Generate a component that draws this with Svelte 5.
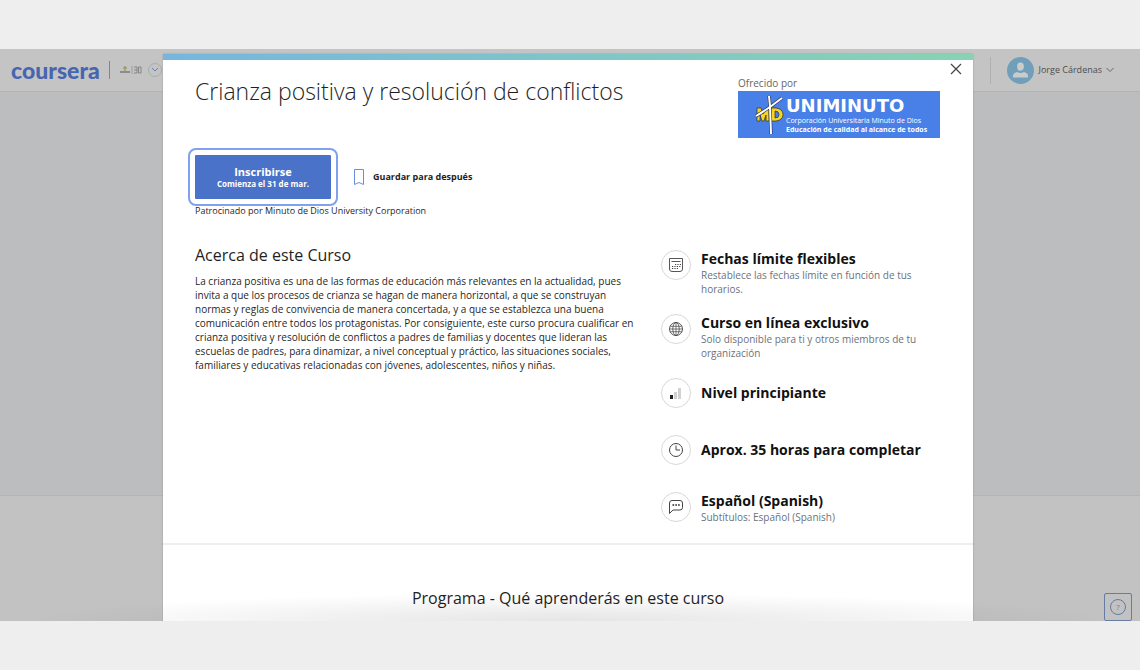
<script>
  const course = {
    title: 'Crianza positiva y resolución de conflictos',
    starts: 'Comienza el 31 de mar.',
    sponsor: 'Patrocinado por Minuto de Dios University Corporation',
    about: 'La crianza positiva es una de las formas de educación más relevantes en la actualidad, pues invita a que los procesos de crianza se hagan de manera horizontal, a que se construyan normas y reglas de convivencia de manera concertada, y a que se establezca una buena comunicación entre todos los protagonistas. Por consiguiente, este curso procura cualificar en crianza positiva y resolución de conflictos a padres de familias y docentes que lideran las escuelas de padres, para dinamizar, a nivel conceptual y práctico, las situaciones sociales, familiares y educativas relacionadas con jóvenes, adolescentes, niños y niñas.',
  };

  const features = [
    { icon: 'calendar', title: 'Fechas límite flexibles', text: 'Restablece las fechas límite en función de tus horarios.' },
    { icon: 'globe', title: 'Curso en línea exclusivo', text: 'Solo disponible para ti y otros miembros de tu organización' },
    { icon: 'level', title: 'Nivel principiante' },
    { icon: 'clock', title: 'Aprox. 35 horas para completar' },
    { icon: 'chat', title: 'Español (Spanish)', text: 'Subtítulos: Español (Spanish)' },
  ];

  let open = $state(true);
  let saved = $state(false);

  function close() {
    open = false;
  }

  function handleKeyDown({ key }) {
    if (key === 'Escape') close();
  }
</script>

<svelte:window onkeydown={handleKeyDown} />

<div class="stage">
  <div class="page">
    <header class="topbar">
      <a class="brand" href="#inicio">coursera</a>
      <div class="partner">
        <svg width="22" height="10" viewBox="0 0 22 10" aria-hidden="true">
          <path d="M0 6h10v2H0z" fill="#8a8c90" />
          <path d="M5 1v5M3 3h4" stroke="#a39a6c" stroke-width="1.5" />
          <path d="M12 1v8" stroke="#9d9d9d" />
          <path d="M14 2h3v6h-3M14 5h3M18.500 2h2.500v6h-2.500z" fill="none" stroke="#858585" />
        </svg>
        <button class="round" type="button" aria-label="Más">
          <svg width="8" height="6" viewBox="0 0 8 6"><path d="M1 1l3 3 3-3" fill="none" stroke="#6783b8" /></svg>
        </button>
      </div>
      <button class="user" type="button">
        <svg width="27" height="27" viewBox="0 0 27 27" aria-hidden="true">
          <circle cx="13.500" cy="13.500" r="13.500" fill="#719fba" />
          <path d="M13.500 5.500q3.400 0 3.400 4t-3.400 4.200-3.400-4.200 3.400-4z" fill="#c9cccd" />
          <path d="M6 20.500v-1.500q0-3 4-4 3.500 2 7 0 4 1 4 4v1.500z" fill="#c9cccd" />
        </svg>
        <span>Jorge Cárdenas</span>
        <svg width="8" height="6" viewBox="0 0 8 6" aria-hidden="true"><path d="M.5 1L4 4.500 7.500 1" fill="none" stroke="#666" /></svg>
      </button>
    </header>
    <div class="hero"></div>
    <div class="below"></div>
    <button class="help" type="button" aria-label="Ayuda">
      <span>?</span>
    </button>
  </div>

  {#if open}
    <div class="overlay">
      <div class="dialog" role="dialog" aria-modal="true" aria-labelledby="course-title">
        <button class="close" type="button" aria-label="Cerrar" onclick={close}>
          <svg width="12" height="12" viewBox="0 0 12 12"><path d="M1 1l10 10M11 1L1 11" fill="none" stroke="#444" stroke-width="1.200" /></svg>
        </button>

        <div class="head">
          <h1 id="course-title">{course.title}</h1>
          <div class="offered">
            <span>Ofrecido por</span>
            <div class="uniminuto">
              <svg width="30" height="43" viewBox="0 0 30 43" aria-hidden="true">
                <path d="M3 28V15h4l2 6 3-6h3v13h-3v-6l-2 6H8l-2-6v6zM17 15h5q7 1 7 6.500T22 28h-5zm4 3v7q4 0 4-3.500T21 18z" fill="#f7d51d" stroke="#252b45" stroke-width=".7" fill-rule="evenodd" />
                <path d="M15 3l1 10 1 28M2 23Q14 16 28 5" fill="none" stroke="#26325a" stroke-width="3.200" />
                <path d="M15 3l1 10 1 28M2 23Q14 16 28 5" fill="none" stroke="#fff" stroke-width="2" />
              </svg>
              <div class="words">
                <strong>UNIMINUTO</strong>
                <span>Corporación Universitaria Minuto de Dios</span>
                <b>Educación de calidad al alcance de todos</b>
              </div>
            </div>
          </div>
        </div>

        <div class="actions">
          <button class="enroll" type="button">
            <span>Inscribirse</span>
            <small>{course.starts}</small>
          </button>
          <button class="save" type="button" aria-pressed={saved} onclick={() => (saved = !saved)}>
            <svg width="12" height="18" viewBox="0 0 12 18" aria-hidden="true">
              <path d="M1.500 1.500h9v15L6 14.500l-4.500 2z" fill={saved ? '#4a72cc' : 'none'} stroke="#6b8fd6" />
            </svg>
            Guardar para después
          </button>
        </div>
        <p class="sponsor">{course.sponsor}</p>

        <div class="body">
          <section class="about">
            <h2>Acerca de este Curso</h2>
            <p>{course.about}</p>
          </section>
          <ul class="features">
            {#each features as feature}
              <li>
                <span class="icon">
                  <svg width="16" height="16" viewBox="0 0 16 16" fill="none" stroke="#444" aria-hidden="true">
                    {#if feature.icon === 'calendar'}
                      <path d="M1.500 1.500h13V12q0 2.500-2.500 2.500H4Q1.500 14.500 1.500 12z" stroke-width=".9" />
                      <path d="M3.500 4.500h9" stroke-width=".9" />
                      <path d="M7 7.500h6M4 9.500h9M4 11.500h6" stroke-width="1.200" stroke-dasharray="1.200 1.200" />
                    {:else if feature.icon === 'globe'}
                      <circle cx="8" cy="8" r="6.500" stroke-width=".9" />
                      <ellipse cx="8" cy="8" rx="3.200" ry="6.500" stroke-width=".8" />
                      <path d="M8 1.500v13M2.200 5.300h11.600M1.500 8h13M2.200 10.700h11.600" stroke-width=".7" />
                    {:else if feature.icon === 'level'}
                      <path d="M2 10h3v4H2z" fill="#222" stroke="none" />
                      <path d="M6 7h3v7H6zM10 3h3v11h-3z" fill="#d2d2d2" stroke="none" />
                    {:else if feature.icon === 'clock'}
                      <circle cx="8" cy="8" r="6.500" />
                      <path d="M8 3.500V8h4" />
                    {:else}
                      <path d="M1.500 14.500V4q0-2.500 2.500-2.500h8q2.500 0 2.500 2.500v4.500q0 2.500-2.500 2.500H5z" stroke-linejoin="round" />
                      <path d="M4.500 6h7.500" stroke="#222" stroke-width="1.600" stroke-dasharray="1.600 1.200" />
                    {/if}
                  </svg>
                </span>
                <div class="label">
                  <h3>{feature.title}</h3>
                  {#if feature.text}
                    <p>{feature.text}</p>
                  {/if}
                </div>
              </li>
            {/each}
          </ul>
        </div>

        <section class="program">
          <h2>Programa - Qué aprenderás en este curso</h2>
        </section>
      </div>
    </div>
  {/if}
  <div class="shade"></div>
</div>

<style>
  :global(body) {
    background: #eee;
  }
  .stage,
  .stage * {
    box-sizing: border-box;
  }
  .stage {
    min-height: calc(100vh - 98px);
    margin: 49px 0;
    display: flex;
    position: relative;
    overflow: hidden;
    color: #1f1f1f;
    font: 9px/14px "Open Sans", "Noto Sans", sans-serif;
  }
  h1, h2, h3, p, ul {
    padding: 0;
    margin: 0;
  }
  button {
    padding: 0;
    border: none;
    background: none;
    color: inherit;
    font: inherit;
    cursor: pointer;
  }
  svg {
    display: block;
    flex: none;
  }

  .page {
    flex: 1;
    display: flex;
    flex-direction: column;
    background: #c2c2c2;
  }
  .topbar {
    height: 43px;
    padding: 0 26px 0 11px;
    border-bottom: solid 1px #b3b3b3;
    background: #c4c4c4;
    display: flex;
    align-items: center;
  }
  .brand {
    color: #4765b0;
    font: 900 23px/22px Lato, sans-serif;
    text-decoration: none;
  }
  .partner {
    height: 18px;
    padding-left: 10px;
    border-left: solid 1px #858585;
    margin-left: 9px;
    display: flex;
    align-items: center;
    gap: 6px;
  }
  .round {
    width: 14px;
    height: 14px;
    border: solid 1px #acacac;
    border-radius: 50%;
    display: grid;
    place-items: center;
  }
  .user {
    height: 27px;
    padding-left: 16px;
    border-left: solid 1px #b0b0b0;
    margin-left: auto;
    display: flex;
    align-items: center;
    gap: 4px;
    color: #4d4d4d;
  }
  .hero {
    flex: 1;
    border-bottom: solid 1px #b2b4b5;
    background: #bcbdbf;
  }
  .below {
    height: 125px;
  }
  .help {
    width: 28px;
    height: 28px;
    border: solid 1px #667ba6;
    border-radius: 2px;
    position: absolute;
    right: 8px;
    bottom: 0;
    display: grid;
    place-items: center;
    color: #667ba6;
  }
  .help span {
    width: 16px;
    height: 16px;
    border: solid 1px;
    border-radius: 50%;
    font-size: 8px;
    line-height: 14px;
  }

  .overlay {
    padding: 5px 4px 0 0;
    position: absolute;
    top: 0;
    left: 0;
    bottom: 0;
    right: 0;
  }
  .dialog {
    max-width: 810px;
    min-height: 100%;
    padding-top: 22px;
    margin: 0 auto;
    background: linear-gradient(90deg, #76b6de, #88d3b3) top / 100% 6px no-repeat #fff;
    box-shadow: 0 0 2px rgba(0, 0, 0, 0.2);
    position: relative;
  }
  .close {
    position: absolute;
    top: 9px;
    right: 11px;
  }
  .head {
    padding: 0 33px 0 32px;
    display: flex;
    justify-content: space-between;
  }
  h1 {
    font-size: 23px;
    font-weight: 300;
    line-height: 30px;
  }
  .offered {
    width: 202px;
    color: #666;
    font-size: 10px;
    line-height: 15px;
  }
  .uniminuto {
    height: 47px;
    padding: 0 16px;
    background: #4880e8;
    display: flex;
    align-items: center;
    gap: 2px;
    color: #fff;
  }
  .words {
    display: flex;
    flex-direction: column;
    font-size: 7px;
    line-height: 9px;
    white-space: nowrap;
  }
  .words strong {
    font: bold 18px/20px "DejaVu Sans", sans-serif;
  }

  .actions {
    padding: 17px 32px 0;
    display: flex;
    align-items: center;
    gap: 22px;
  }
  .enroll {
    width: 136px;
    height: 44px;
    border-radius: 1px;
    outline: solid 2px #7fa1f0;
    outline-offset: 5px;
    background: #4a72c8;
    display: flex;
    flex-direction: column;
    align-items: center;
    justify-content: center;
    color: #fff;
    font-size: 11px;
    font-weight: bold;
    line-height: 14px;
  }
  .enroll small {
    font-size: 8px;
    line-height: 10px;
  }
  .save {
    display: flex;
    align-items: center;
    gap: 8px;
    font-weight: bold;
  }
  .sponsor {
    padding: 5px 32px 0;
  }

  .body {
    padding: 22px 33px 4px 32px;
    display: grid;
    grid-template-columns: 1fr 279px;
    gap: 26px;
  }
  h2 {
    font-size: 16px;
    font-weight: normal;
    line-height: 22px;
  }
  .about {
    padding-top: 4px;
  }
  .about p {
    margin-top: 8px;
    font-size: 10px;
  }
  .features {
    list-style: none;
    font-size: 10px;
  }
  .features li {
    min-height: 57px;
    padding: 10px 0 8px;
    display: flex;
    align-items: flex-start;
    gap: 10px;
  }
  .icon {
    width: 30px;
    height: 30px;
    border: solid 1px #d8d8d8;
    border-radius: 50%;
    flex: none;
    display: grid;
    place-items: center;
  }
  .label {
    flex: 1;
    min-height: 30px;
    display: flex;
    flex-direction: column;
    justify-content: center;
    color: #6c727c;
  }
  h3 {
    color: #111;
    font-size: 14px;
    line-height: 18px;
  }
  .program {
    padding: 42px 32px;
    border-top: solid 2px #eee;
    text-align: center;
  }
  .shade {
    height: 28px;
    background: radial-gradient(ellipse 48% 100% at 50% 100%, rgba(0, 0, 0, 0.1), transparent);
    position: absolute;
    left: 0;
    bottom: 0;
    right: 0;
    pointer-events: none;
  }
</style>
